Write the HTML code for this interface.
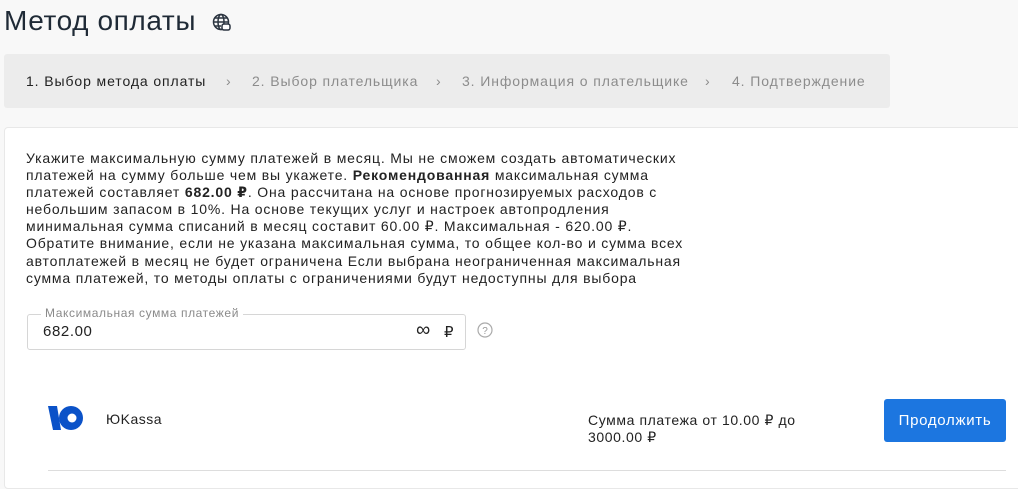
<!DOCTYPE html>
<html><head><meta charset="utf-8"><style>
body{margin:0;background:#f8f8f8;font-family:"Liberation Sans","DejaVu Sans",sans-serif;color:#222;width:1018px;height:478px;overflow:hidden;position:relative}
.a{position:absolute;white-space:nowrap}
h1{position:absolute;left:4px;top:5px;margin:0;font-size:28px;letter-spacing:0.6px;font-weight:normal;color:#1f2a36}
.bc{position:absolute;left:4px;top:54px;width:886px;height:54px;background:#ececec;border-radius:3px}
.bc span{position:absolute;top:19px;font-size:14px;letter-spacing:0.9px;color:#8c8c8c;white-space:nowrap}
.card{position:absolute;left:4px;top:127px;width:1030px;height:360px;background:#fff;border:1px solid #e8e8e8;border-radius:4px}
.txt{position:absolute;left:26px;top:150px;font-size:14px;letter-spacing:0.82px;line-height:17.1px;color:#222;white-space:nowrap}
.inp{position:absolute;left:27px;top:314px;width:437px;height:34px;border:1px solid #d6d6d6;border-radius:3px}
.btn{position:absolute;left:884px;top:399px;width:122px;height:43px;background:#1c76e0;border-radius:3px;color:#fff;font-size:15px;letter-spacing:0.7px;text-align:center;line-height:43px}
</style></head><body>
<h1>Метод оплаты</h1>
<svg class="a" style="left:212px;top:13px" width="20" height="20" viewBox="0 0 20 20" fill="none" stroke="#2b3440" stroke-width="1.5"><circle cx="9" cy="9" r="7.5"/><ellipse cx="9" cy="9" rx="3" ry="7.5"/><path d="M1.5 9h15M3 5h12M3 13h6"/><rect x="10" y="11" width="8" height="6" rx="2" fill="#fff"/></svg>
<div class="bc">
<span style="left:22px;color:#222">1. Выбор метода оплаты</span>
<span style="left:222px">›</span>
<span style="left:248px">2. Выбор плательщика</span>
<span style="left:432px">›</span>
<span style="left:458px">3. Информация о плательщике</span>
<span style="left:701px">›</span>
<span style="left:728px">4. Подтверждение</span>
</div>
<div class="card"></div>
<div class="txt">Укажите максимальную сумму платежей в месяц. Мы не сможем создать автоматических<br>платежей на сумму больше чем вы укажете. <b>Рекомендованная</b> максимальная сумма<br>платежей составляет <b>682.00 ₽</b>. Она рассчитана на основе прогнозируемых расходов с<br>небольшим запасом в 10%. На основе текущих услуг и настроек автопродления<br>минимальная сумма списаний в месяц составит 60.00 ₽. Максимальная - 620.00 ₽.<br>Обратите внимание, если не указана максимальная сумма, то общее кол-во и сумма всех<br>автоплатежей в месяц не будет ограничена Если выбрана неограниченная максимальная<br>сумма платежей, то методы оплаты с ограничениями будут недоступны для выбора</div>
<div class="inp"></div>
<div class="a" style="left:41px;top:306px;font-size:12px;letter-spacing:0.6px;color:#8a8a8a;background:#fff;padding:0 4px">Максимальная сумма платежей</div>
<div class="a" style="left:43px;top:323px;font-size:15px;letter-spacing:0.6px">682.00</div>
<div class="a" style="left:416px;top:319px;font-size:20px">∞</div>
<div class="a" style="left:444px;top:323px;font-size:15px">₽</div>
<svg class="a" style="left:477px;top:322px" width="16" height="16" viewBox="0 0 16 16"><circle cx="8" cy="8" r="7" fill="none" stroke="#aaa" stroke-width="1.2"/><text x="8" y="12" font-size="10" text-anchor="middle" fill="#999" font-family="Liberation Sans">?</text></svg>
<svg class="a" style="left:48px;top:405px" width="36" height="26" viewBox="0 0 36 26"><path d="M0 1h9l4 24H5z" fill="#0b52c8"/><circle cx="23" cy="13" r="12" fill="#0b52c8"/><circle cx="24" cy="13" r="4.5" fill="#fff"/></svg>
<div class="a" style="left:106px;top:411px;font-size:14px;letter-spacing:0.5px">ЮKassa</div>
<div class="a" style="left:588px;top:412px;font-size:14px;letter-spacing:0.6px;line-height:17px">Сумма платежа от 10.00 ₽ до<br>3000.00 ₽</div>
<div class="btn">Продолжить</div>
<div class="a" style="left:48px;top:470px;width:958px;height:1px;background:#ddd"></div>
</body></html>
